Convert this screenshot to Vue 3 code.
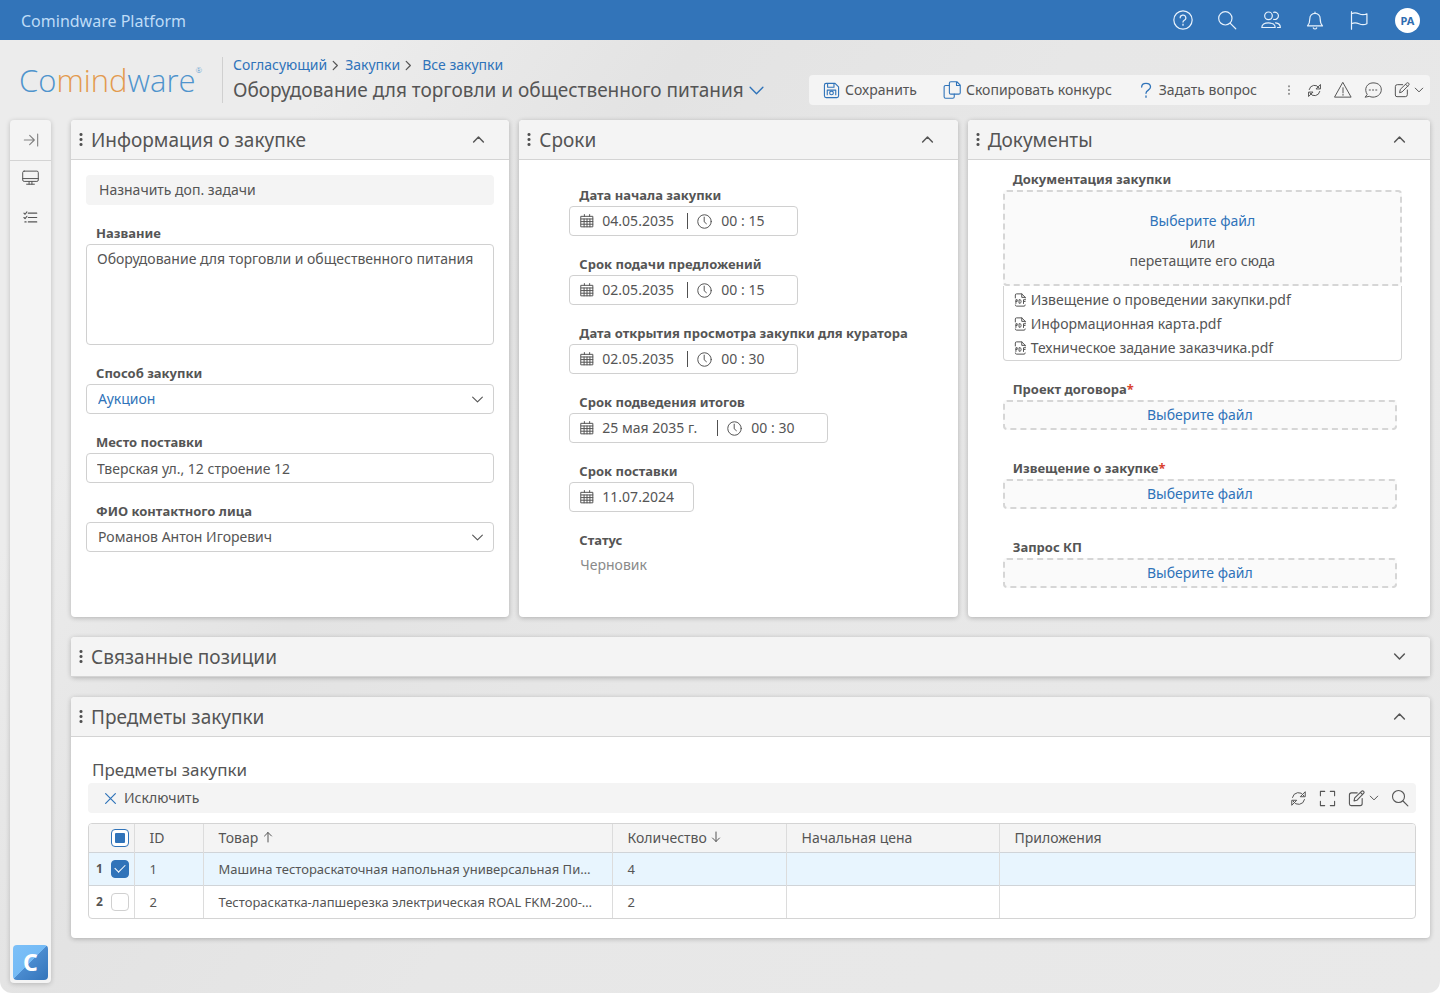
<script setup>
import { h, reactive } from 'vue'

const glyphs = {
  help: '<circle cx="12" cy="12" r="11"/><path d="M8.6 9.4a3.4 3.2 0 1 1 5 2.8c-1.2.7-1.6 1.2-1.6 2.3"/><path d="M12 17v1.4"/>',
  search: '<circle cx="10" cy="10" r="8"/><path d="M16 16l6.500 6.500"/>',
  users: '<circle cx="9" cy="7" r="4.6"/><path d="M15.2 2.8a4.4 4.4 0 1 1 0 8.4"/><path d="M1 21c0-3.600 3.200-5.500 8-5.500s8 1.900 8 5.500z"/><path d="M17.500 15.500c3.500.3 5.700 2.200 5.700 5.500h-3.400"/>',
  bell: '<path d="M12 2.400V4M3 19c2-2 2.800-4 2.800-8.500A6.200 6.200 0 0 1 12 4a6.200 6.200 0 0 1 6.200 6.500C18.200 15 19 17 21 19z"/><path d="M10 21.500a2.200 2.200 0 0 0 4 0"/>',
  flag: '<path d="M3 2v21M3 4.500c3-1.600 6-1.400 9 0s6 1.600 9.500 0v12c-3.500 1.600-6.500 1.400-9.500 0s-6-1.600-9 0"/>',
  collapse: '<path d="M2 12h15M10 5l7 7-7 7M22 3v18"/>',
  monitor: '<rect x="1" y="3" width="22" height="14.500" rx="2"/><path d="M1 13.500h22M10 17.500v4M14 17.500v4M6.500 21.500h11"/>',
  checklist: '<path d="M8.500 5H22M8.500 12H22M8.500 19H22M1.500 5l1.800 1.800L6.300 3M1.500 12l1.800 1.800L6.300 10M3 19h2"/>',
  save: '<path d="M2 4.500A2.500 2.500 0 0 1 4.500 2H17l5 5v12.500a2.500 2.500 0 0 1-2.500 2.500h-15A2.500 2.500 0 0 1 2 19.500zM6.500 2v5.500h9V2"/><circle cx="12" cy="15.500" r="2.600"/><path d="M6 18v-6.500h12V18"/>',
  copy: '<path d="M10.500 1h8L23 5.500v10a2 2 0 0 1-2 2H10.500a2 2 0 0 1-2-2V3a2 2 0 0 1 2-2zM18 1v5h5"/><path d="M8.500 6H3.500a2 2 0 0 0-2 2v13a2 2 0 0 0 2 2h9.500a2 2 0 0 0 2-2v-3.500"/>',
  question: '<path d="M5.500 7.500C5.500 4 8 2 12 2s6.800 2.200 6.800 5.500c0 4.800-6.800 4.500-6.800 9.500M12 21v2"/>',
  dots: '<path d="M12 3.500v2M12 11v2M12 18.500v2"/>',
  refresh: '<path d="M3.500 10.500A8.700 8.700 0 0 1 19.500 8M20.500 13.500A8.700 8.700 0 0 1 4.500 16M21.500 3v6.500H15zM2.500 21v-6.500H9z"/>',
  warning: '<path d="M12 2.200L22.800 21.500H1.200zM12 9v6.500M12 17.500v1.500"/>',
  chat: '<path d="M4 17.500C-.500 10.500 4 2.500 12 2.500S23.500 7 23 12.500s-5.500 9-11 9c-2 0-3.500-.4-5-1.100L2 21.500z"/><path d="M7 12h1.500M11.300 12h1.500M15.600 12h1.500"/>',
  edit: '<path d="M13 4H5a3 3 0 0 0-3 3v12.500A2.500 2.500 0 0 0 4.500 22H17a3 3 0 0 0 3-3v-7M8.500 15.500l1-4.500L19 1.800a2 2 0 0 1 3 3L12.500 14.500z M17.500 3.500l3 3"/>',
  up: '<path d="M3 16.500l9-9 9 9"/>',
  down: '<path d="M3 7.500l9 9 9-9"/>',
  right: '<path d="M7 3l9 9-9 9"/>',
  calendar: '<path d="M2 4h20v18H2zM2 8.500h20M2 13h20M2 17.500h20M7.500 1v3M16.500 1v3M7 8.500V22M12 8.500V22M17 8.500V22"/>',
  clock: '<circle cx="12" cy="12" r="10.800"/><path d="M11.500 5v7.500l3.500 3"/>',
  expand: '<path d="M2 8V2h6M16 2h6v6M22 16v6h-6M8 22H2v-6"/>',
  close: '<path d="M3 3l18 18M21 3L3 21"/>',
  arrowUp: '<path d="M12 22V3M5 10l7-7 7 7"/>',
  arrowDown: '<path d="M12 2v19M5 14l7 7 7-7"/>',
  pdf: '<path d="M4 8.500V3.500a2 2 0 0 1 2-2h9l6 6v1M15 1.500v6h6M4 20.500a2 2 0 0 0 2 2h13a2 2 0 0 0 2-2"/><path d="M5 18v-6.500h2.200v3H5M11 11.500h1.200c2.300 0 2.300 6 0 6H11zM18 18v-6.500h3.500M18 14.500h2.800" stroke-width="1.700"/>'
}

const Icon = (props) =>
  h('svg', {
    viewBox: '0 0 24 24',
    width: props.size,
    height: props.size,
    fill: 'none',
    stroke: 'currentColor',
    'stroke-width': ((props.weight || 1) * 24) / props.size,
    'stroke-linecap': 'round',
    'stroke-linejoin': 'round',
    'aria-hidden': 'true',
    innerHTML: glyphs[props.name]
  })
Icon.props = ['name', 'size', 'weight']

const crumbs = ['Согласующий', 'Закупки', 'Все закупки']
const globalActions = [
  { icon: 'help', label: 'Справка' },
  { icon: 'search', label: 'Поиск' },
  { icon: 'users', label: 'Пользователи' },
  { icon: 'bell', label: 'Уведомления' },
  { icon: 'flag', label: 'Флаги' }
]

const info = reactive({
  title: 'Оборудование для торговли и общественного питания',
  method: 'Аукцион',
  place: 'Тверская ул., 12 строение 12',
  contact: 'Романов Антон Игоревич'
})

const dates = reactive([
  { id: 'start', label: 'Дата начала закупки', date: '04.05.2035', time: '00 : 15' },
  { id: 'offers', label: 'Срок подачи предложений', date: '02.05.2035', time: '00 : 15' },
  { id: 'review', label: 'Дата открытия просмотра закупки для куратора', date: '02.05.2035', time: '00 : 30' },
  { id: 'results', label: 'Срок подведения итогов', date: '25 мая 2035 г.', time: '00 : 30', long: true },
  { id: 'delivery', label: 'Срок поставки', date: '11.07.2024' }
])

const files = ['Извещение о проведении закупки.pdf', 'Информационная карта.pdf', 'Техническое задание заказчика.pdf']
const uploads = [
  { id: 'contract', label: 'Проект договора', required: true },
  { id: 'notice', label: 'Извещение о закупке', required: true },
  { id: 'request', label: 'Запрос КП', required: false }
]

const rows = reactive([
  { id: 1, name: 'Машина тестораскаточная напольная универсальная Пицца', count: 4, checked: true },
  { id: 2, name: 'Тестораскатка-лапшерезка электрическая ROAL FKM-200-220', count: 2, checked: false }
])
</script>

<template>
  <div class="app">
    <header class="topbar">
      <span class="product">Comindware Platform</span>
      <nav class="global">
        <button v-for="a in globalActions" :key="a.icon" type="button" :aria-label="a.label">
          <Icon :name="a.icon" size="20" weight="1.2" />
        </button>
        <button type="button" class="avatar">PA</button>
      </nav>
    </header>

    <div class="pagehead">
      <a href="#" class="logo">Co<span class="warm">mind</span>ware<sup>®</sup></a>
      <div class="heading">
        <nav class="crumbs">
          <template v-for="(c, i) in crumbs" :key="c">
            <Icon v-if="i" name="right" size="11" weight="1.2" class="sep" />
            <a href="#">{{ c }}</a>
          </template>
        </nav>
        <h1>{{ info.title }}<Icon name="down" size="17" weight="1.4" class="blue" /></h1>
      </div>
      <div class="actions">
        <button type="button" class="act"><Icon name="save" size="17" weight="1.1" class="blue" />Сохранить</button>
        <button type="button" class="act"><Icon name="copy" size="18" weight="1.1" class="blue" />Скопировать конкурс</button>
        <button type="button" class="act"><Icon name="question" size="16" weight="1.3" class="blue" />Задать вопрос</button>
        <div class="tools">
          <button type="button" aria-label="Ещё"><Icon name="dots" size="12" weight="1.2" /></button>
          <button type="button" aria-label="Обновить"><Icon name="refresh" size="15" /></button>
          <button type="button" aria-label="Ошибки"><Icon name="warning" size="18" /></button>
          <button type="button" aria-label="Обсуждение"><Icon name="chat" size="18" /></button>
          <button type="button" aria-label="Настройка"><Icon name="edit" size="16" /><Icon name="down" size="10" /></button>
        </div>
      </div>
    </div>

    <div class="body">
      <aside class="sidebar">
        <button type="button" class="toggle" aria-label="Развернуть"><Icon name="collapse" size="16" weight="1.1" /></button>
        <button type="button" aria-label="Рабочий стол"><Icon name="monitor" size="17" /></button>
        <button type="button" aria-label="Задачи"><Icon name="checklist" size="15" weight="1.1" /></button>
        <a href="#" class="cbadge">C</a>
      </aside>

      <main class="content">
        <div class="cards">
          <section class="card">
            <header class="cardhead">
              <i class="grip"></i><h2>Информация о закупке</h2>
              <button type="button" aria-label="Свернуть"><Icon name="up" size="13" weight="1.5" /></button>
            </header>
            <form class="form info" @submit.prevent>
              <button type="button" class="task">Назначить доп. задачи</button>
              <div class="field">
                <label for="title">Название</label>
                <textarea id="title" v-model="info.title" class="box"></textarea>
              </div>
              <div class="field">
                <label for="method">Способ закупки</label>
                <div class="pick">
                  <select id="method" v-model="info.method" class="box link"><option>Аукцион</option></select>
                  <Icon name="down" size="13" weight="1.1" />
                </div>
              </div>
              <div class="field">
                <label for="place">Место поставки</label>
                <input id="place" v-model="info.place" type="text" class="box" />
              </div>
              <div class="field">
                <label for="contact">ФИО контактного лица</label>
                <div class="pick">
                  <select id="contact" v-model="info.contact" class="box"><option>Романов Антон Игоревич</option></select>
                  <Icon name="down" size="13" weight="1.1" />
                </div>
              </div>
            </form>
          </section>

          <section class="card">
            <header class="cardhead">
              <i class="grip"></i><h2>Сроки</h2>
              <button type="button" aria-label="Свернуть"><Icon name="up" size="13" weight="1.5" /></button>
            </header>
            <form class="form terms" @submit.prevent>
              <div v-for="d in dates" :key="d.id" class="field">
                <label :for="d.id">{{ d.label }}</label>
                <div class="box datetime">
                  <Icon name="calendar" size="14" />
                  <input :id="d.id" v-model="d.date" type="text" :class="['date', { long: d.long }]" />
                  <template v-if="d.time">
                    <i class="bar"></i>
                    <Icon name="clock" size="15" />
                    <input v-model="d.time" type="text" class="time" :aria-label="d.label + ', время'" />
                  </template>
                </div>
              </div>
              <div class="field">
                <label for="status">Статус</label>
                <output id="status">Черновик</output>
              </div>
            </form>
          </section>

          <section class="card wide">
            <header class="cardhead">
              <i class="grip"></i><h2>Документы</h2>
              <button type="button" aria-label="Свернуть"><Icon name="up" size="13" weight="1.5" /></button>
            </header>
            <form class="form docs" @submit.prevent>
              <div class="field">
                <label for="docs">Документация закупки</label>
                <div class="zone drop">
                  <button id="docs" type="button" class="link">Выберите файл</button>
                  <span>или</span>
                  <span>перетащите его сюда</span>
                </div>
                <ul class="files">
                  <li v-for="f in files" :key="f"><Icon name="pdf" size="14" />{{ f }}</li>
                </ul>
              </div>
              <div v-for="u in uploads" :key="u.id" class="field upload">
                <label :for="u.id">{{ u.label }}<span v-if="u.required" class="req">*</span></label>
                <button :id="u.id" type="button" class="zone link">Выберите файл</button>
              </div>
            </form>
          </section>
        </div>

        <section class="card">
          <header class="cardhead">
            <i class="grip"></i><h2>Связанные позиции</h2>
            <button type="button" aria-label="Развернуть"><Icon name="down" size="13" weight="1.5" /></button>
          </header>
        </section>

        <section class="card">
          <header class="cardhead">
            <i class="grip"></i><h2>Предметы закупки</h2>
            <button type="button" aria-label="Свернуть"><Icon name="up" size="13" weight="1.5" /></button>
          </header>
          <div class="items">
            <h3>Предметы закупки</h3>
            <div class="gridbar">
              <button type="button" class="act"><Icon name="close" size="13" weight="1.2" class="blue" />Исключить</button>
              <div class="tools">
                <button type="button" aria-label="Обновить"><Icon name="refresh" size="17" /></button>
                <button type="button" aria-label="На весь экран"><Icon name="expand" size="17" weight="1.1" /></button>
                <button type="button" aria-label="Настройка"><Icon name="edit" size="17" weight="1.1" /><Icon name="down" size="10" /></button>
                <button type="button" aria-label="Поиск"><Icon name="search" size="18" weight="1.1" /></button>
              </div>
            </div>
            <div class="tablewrap">
              <table>
                <colgroup><col class="c-sel" /><col class="c-id" /><col class="c-name" /><col class="c-count" /><col class="c-price" /><col /></colgroup>
                <thead>
                  <tr>
                    <th class="sel"><div><input type="checkbox" :indeterminate.prop="true" aria-label="Выбрать все" /></div></th>
                    <th>ID</th>
                    <th>Товар <Icon name="arrowUp" size="12" /></th>
                    <th>Количество <Icon name="arrowDown" size="12" /></th>
                    <th>Начальная цена</th>
                    <th>Приложения</th>
                  </tr>
                </thead>
                <tbody>
                  <tr v-for="r in rows" :key="r.id" :class="{ on: r.checked }">
                    <td class="sel"><div><b>{{ r.id }}</b><input v-model="r.checked" type="checkbox" :aria-label="'Строка ' + r.id" /></div></td>
                    <td>{{ r.id }}</td>
                    <td>{{ r.name }}</td>
                    <td>{{ r.count }}</td>
                    <td></td>
                    <td></td>
                  </tr>
                </tbody>
              </table>
            </div>
          </div>
        </section>
      </main>
    </div>
  </div>
</template>

<style>
body {
  background: #fff;
}
</style>

<style scoped>
.app,
.app * {
  box-sizing: border-box;
}
.app {
  display: flex;
  flex-direction: column;
  min-height: 100vh;
  border-radius: 0 0 12px 12px;
  background:
    linear-gradient(125deg, #ececec 0, #ececec 18%, #e3e3e3 34%, #e7e7e7 52%, #e9e9e9 100%);
  color: #555;
  font: 14px/20px "Noto Sans", "Open Sans", sans-serif;
}
button,
input,
select,
textarea {
  margin: 0;
  padding: 0;
  border: 0;
  background: none;
  color: inherit;
  font: inherit;
}
h1,
h2,
h3,
ul {
  margin: 0;
  padding: 0;
  font-weight: 400;
  list-style: none;
}
a {
  color: #2f73ba;
  text-decoration: none;
}
svg {
  display: block;
  flex: none;
}
.blue,
.link {
  color: #2f73b9;
}
.topbar {
  display: flex;
  align-items: center;
  justify-content: space-between;
  height: 40px;
  padding: 0 20px 0 21px;
  background: #3274b9;
  color: #e8f2fc;
}
.product {
  padding-top: 2px;
  color: #bfdcf7;
  font-size: 16px;
  line-height: 22px;
}
.global {
  display: flex;
  align-items: center;
  gap: 24px;
}
.avatar {
  width: 25px;
  height: 25px;
  margin-left: 2px;
  border-radius: 50%;
  background: #fff;
  color: #2f6db0;
  font-size: 11px;
  font-weight: 700;
  line-height: 25px;
}
.pagehead {
  display: flex;
  align-items: center;
  height: 80px;
  padding: 0 10px 0 19px;
}
.logo {
  display: flex;
  width: 203px;
  color: #4f94cd;
  font: 300 31px/40px "Open Sans", "Noto Sans", sans-serif;
}
.logo .warm {
  color: #e39a4e;
}
.logo sup {
  font-size: 8px;
  line-height: 20px;
}
.heading {
  flex: 1;
  padding-left: 10px;
  border-left: 1px solid #d0d0d0;
}
.crumbs {
  display: flex;
  align-items: center;
  height: 16px;
  margin-bottom: 4px;
}
.crumbs a {
  margin-right: 3px;
}
.sep {
  margin: 0 4px 0 0;
}
.sep ~ .sep {
  margin: 0 8px 0 0;
}
.heading h1 {
  display: flex;
  align-items: center;
  gap: 4px;
  font-size: 19px;
  line-height: 26px;
  white-space: nowrap;
}
.actions {
  display: flex;
  align-items: center;
  height: 30px;
  margin-top: 20px;
  padding: 0 6px 0 14px;
  border-radius: 4px;
  background: #f4f4f4;
}
.act {
  display: flex;
  align-items: center;
  gap: 5px;
  margin-right: 26px;
  white-space: nowrap;
}
.tools {
  display: flex;
  align-items: center;
  gap: 12px;
}
.tools button {
  display: flex;
  align-items: center;
  gap: 4px;
}
.body {
  display: flex;
  flex: 1;
  gap: 20px;
  padding: 0 10px 10px;
}
.sidebar {
  display: flex;
  flex: none;
  flex-direction: column;
  align-items: center;
  width: 41px;
  padding-bottom: 3px;
  border-radius: 4px;
  background: #f4f4f4;
  box-shadow: 0 1px 5px rgba(0, 0, 0, 0.2);
}
.sidebar button {
  display: grid;
  place-items: center;
  width: 100%;
  height: 40px;
}
.sidebar .toggle {
  height: 41px;
  margin-bottom: -4px;
  border-bottom: 1px solid #d4d4d4;
  color: #808080;
}
.cbadge {
  width: 35px;
  height: 35px;
  margin-top: auto;
  border-radius: 4px;
  background: linear-gradient(135deg, #7cc0f8 0, #74baf5 50%, #4a8bcf 50%, #3374ba 100%);
  color: #fff;
  font-size: 23px;
  font-weight: 700;
  line-height: 34px;
  text-align: center;
}
.content {
  display: flex;
  flex: 1;
  flex-direction: column;
  gap: 20px;
  min-width: 0;
}
.cards {
  display: flex;
  gap: 10px;
}
.card {
  border-radius: 4px;
  background: #fff;
  box-shadow: 0 1px 5px rgba(0, 0, 0, 0.24);
}
.cards .card {
  flex: 439 1 0;
  min-width: 0;
}
.cards .wide {
  flex-grow: 463;
}
.cardhead {
  display: flex;
  align-items: center;
  height: 40px;
  padding: 0 24px 0 8px;
  border-bottom: 1px solid #d4d4d4;
  border-radius: 4px 4px 0 0;
  background: #f4f4f4;
}
.cardhead h2 {
  flex: 1;
  padding-left: 8px;
  font-size: 19px;
  line-height: 26px;
}
.grip {
  width: 4px;
  height: 15px;
  background: radial-gradient(circle, #505050 1px, transparent 2px) 0 0 / 4px 5px;
}
.form {
  display: flex;
  flex-direction: column;
  gap: 17px;
}
.info {
  padding: 15px 15px 28px;
}
.terms {
  padding: 24px 30px 28px 50px;
}
.docs {
  padding: 8px 28px 29px 35px;
}
.task {
  height: 30px;
  padding: 0 13px;
  border-radius: 4px;
  background: #f4f4f4;
  text-align: left;
}
.field {
  display: flex;
  flex-direction: column;
}
.field label {
  padding-left: 10px;
  font-size: 13px;
  font-weight: 700;
  line-height: 22px;
}
.box {
  width: 100%;
  height: 30px;
  padding: 0 10px;
  border: 1px solid #d0d0d0;
  border-radius: 4px;
  background: #fff;
}
textarea.box {
  display: block;
  height: 101px;
  padding-top: 4px;
  resize: none;
}
.pick {
  display: grid;
  align-items: center;
}
.pick > * {
  grid-area: 1 / 1;
}
.pick select {
  padding-left: 11px;
  appearance: none;
}
.pick svg {
  justify-self: end;
  margin-right: 10px;
  pointer-events: none;
}
.datetime {
  display: flex;
  align-items: center;
  width: fit-content;
}
.date {
  width: 81px;
  margin-left: 8px;
}
.date.long {
  width: 111px;
}
.bar {
  width: 1px;
  height: 16px;
  margin: 0 9px 0 4px;
  background: #505050;
}
.time {
  width: 66px;
  margin-left: 9px;
}
output {
  padding: 4px 11px;
  color: #8a8a8a;
}
.zone {
  border: 2px dashed #d6d6d6;
  border-radius: 4px;
  background: #fafafa;
}
.drop {
  display: flex;
  flex-direction: column;
  align-items: center;
  padding: 16px 0 14px;
}
.drop span {
  line-height: 18px;
}
.drop .link {
  height: 26px;
  line-height: 24px;
}
.files {
  padding: 2px 9px 0;
  border: 1px solid #d4d4d4;
  border-top: 0;
  border-radius: 0 0 4px 4px;
}
.files li {
  display: flex;
  align-items: center;
  gap: 4px;
  height: 24px;
}
.upload + .upload {
  margin-top: 10px;
}
.upload .zone {
  height: 30px;
  margin-right: 5px;
}
.req {
  color: #d9432f;
}
.items {
  padding: 20px 14px 19px 17px;
}
.items h3 {
  padding-left: 4px;
  font-size: 17px;
  line-height: 26px;
}
.gridbar {
  display: flex;
  align-items: center;
  justify-content: space-between;
  height: 30px;
  padding: 0 7px 0 16px;
  border-radius: 4px;
  background: #f4f4f4;
}
.gridbar .act {
  gap: 7px;
}
.tablewrap {
  margin-top: 10px;
  border: 1px solid #d4d4d4;
  border-radius: 4px;
  overflow: hidden;
}
table {
  width: 100%;
  border-collapse: collapse;
  table-layout: fixed;
}
.c-sel {
  width: 45px;
}
.c-id {
  width: 69px;
}
.c-name {
  width: 409px;
}
.c-count {
  width: 174px;
}
.c-price {
  width: 213px;
}
th,
td {
  height: 33px;
  padding: 0 15px;
  border-left: 1px solid #dcdcdc;
  border-top: 1px solid #d0d4d8;
  font-size: 13px;
  font-weight: 400;
  text-align: left;
  white-space: nowrap;
  overflow: hidden;
  text-overflow: ellipsis;
}
th {
  height: 28px;
  border-top: 0;
  background: #f4f4f4;
  font-size: 14px;
}
th:first-child,
td:first-child {
  border-left: 0;
}
th svg {
  display: inline-block;
}
.on td {
  background: #e8f5fe;
}
.sel {
  padding: 0 5px 0 7px;
}
.sel div {
  display: flex;
  align-items: center;
  justify-content: space-between;
}
.sel b {
  font-size: 12px;
}
.sel input {
  display: grid;
  place-items: center;
  width: 18px;
  height: 18px;
  margin-left: auto;
  border: 1px solid #d0d0d0;
  border-radius: 4px;
  background: #fff;
  appearance: none;
}
.sel input:checked {
  border-color: #3073b9;
  background: #3073b9;
}
.sel input:checked::after {
  content: "";
  width: 9px;
  height: 5px;
  margin-bottom: 3px;
  border: solid #fff;
  border-width: 0 0 1px 1px;
  transform: rotate(-45deg);
}
.sel input:indeterminate {
  border-color: #3073b9;
}
.sel input:indeterminate::after {
  content: "";
  width: 10px;
  height: 10px;
  border-radius: 1px;
  background: #3073b9;
}
</style>
